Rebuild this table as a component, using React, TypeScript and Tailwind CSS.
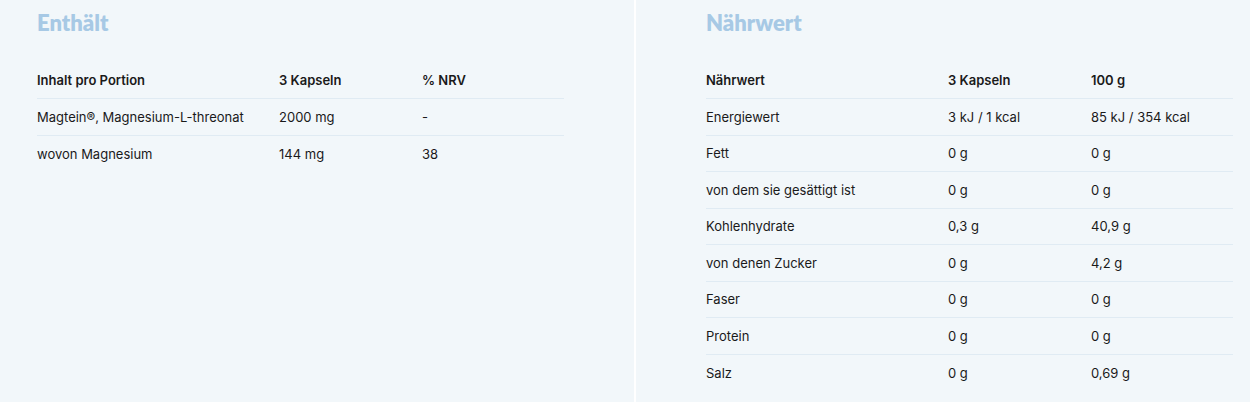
const enthaelt = [
  ["Magtein®, Magnesium-L-threonat", "2000 mg", "-"],
  ["wovon Magnesium", "144 mg", "38"],
];

const naehrwert = [
  ["Energiewert", "3 kJ / 1 kcal", "85 kJ / 354 kcal"],
  ["Fett", "0 g", "0 g"],
  ["von dem sie gesättigt ist", "0 g", "0 g"],
  ["Kohlenhydrate", "0,3 g", "40,9 g"],
  ["von denen Zucker", "0 g", "4,2 g"],
  ["Faser", "0 g", "0 g"],
  ["Protein", "0 g", "0 g"],
  ["Salz", "0 g", "0,69 g"],
];

function Table({ head, rows }: { head: string[]; rows: string[][] }) {
  return (
    <div
      className="w-[527px] text-[13px] text-[#1a1a1a]"
      style={{ fontFamily: "Inter, 'Noto Sans', sans-serif" }}
    >
      <div className="flex h-[36.5px] items-center border-b border-[#e0ebf3] font-semibold">
        <div className="w-[242px]">{head[0]}</div>
        <div className="w-[143px]">{head[1]}</div>
        <div>{head[2]}</div>
      </div>
      {rows.map((r, i) => (
        <div
          key={i}
          className={
            "flex h-[36.5px] items-center pt-[1px] " +
            (i < rows.length - 1 ? "border-b border-[#e0ebf3]" : "")
          }
        >
          <div className="w-[242px]">{r[0]}</div>
          <div className="w-[143px]">{r[1]}</div>
          <div>{r[2]}</div>
        </div>
      ))}
    </div>
  );
}

export default function App() {
  return (
    <div
      className="flex h-[402px] w-[1250px] bg-[#f2f7fa]"
      style={{ fontFamily: "Lato, 'Noto Sans', sans-serif" }}
    >
      <div className="w-[634px] pl-[37px] pt-[9px]">
        <h2 className="mb-[25.5px] text-[22px] font-extrabold leading-[28px] text-[#a7c9e5]">
          Enthält
        </h2>
        <Table head={["Inhalt pro Portion", "3 Kapseln", "% NRV"]} rows={enthaelt} />
      </div>
      <div className="w-[2px] bg-white" />
      <div className="flex-1 pl-[70px] pt-[9px]">
        <h2 className="mb-[25.5px] text-[22px] font-extrabold leading-[28px] text-[#a7c9e5]">
          Nährwert
        </h2>
        <Table head={["Nährwert", "3 Kapseln", "100 g"]} rows={naehrwert} />
      </div>
    </div>
  );
}
